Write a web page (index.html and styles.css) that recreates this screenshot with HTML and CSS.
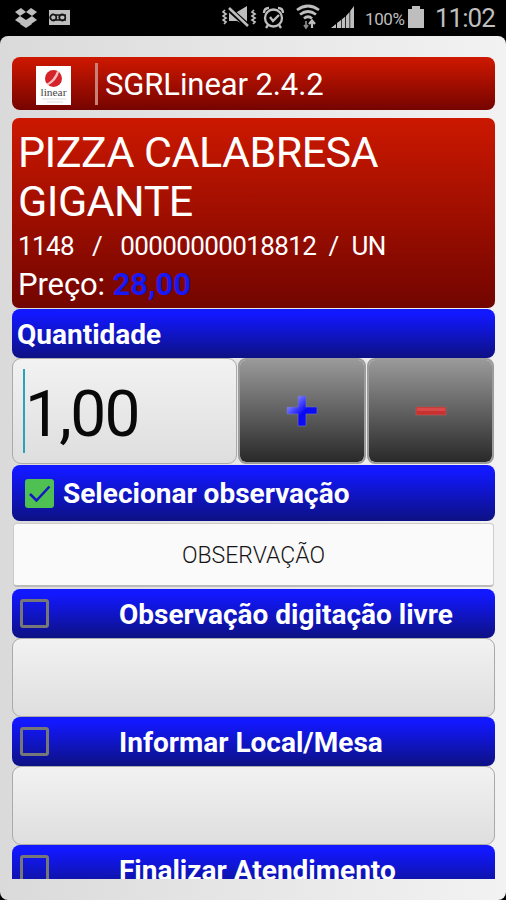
FILE: index.html
```html
<!DOCTYPE html>
<html lang="pt-BR">
<head>
<meta charset="utf-8">
<title>SGRLinear 2.4.2</title>
<link rel="stylesheet" href="styles.css">
</head>
<body>
<header class="status">
  <svg class="status-left" width="54" height="22" viewBox="0 0 54 22" fill="#bebebe">
    <path d="M6 1l5 4-6 4-5-4zM16 1l6 4-5 4-6-4zM5 9l6 4-5 4-6-4zM17 9l5 4-6 4-5-4zM5 17l6-4 6 4-6 4z"/>
    <path d="M34 3h21v15H34z"/>
    <path d="M40 8h11M40 8a3 3 0 1 0 0 5a3 3 0 0 0 0-5M49 8a3 3 0 1 0 0 5a3 3 0 0 0 0-5M38 13h13" fill="none" stroke="#111" stroke-width="1.7"/>
  </svg>
  <svg class="status-right" width="136" height="26" viewBox="0 0 136 26" fill="none" stroke="#bebebe">
    <path d="M3 6l-2 2 3 2-3 2 3 2-3 2 3 2-2 2M32 6l-2 2 3 2-3 2 3 2-3 2 3 2-2 2" stroke-width="1.7"/>
    <path d="M7 8h8l10-6v20l-10-5H7z" fill="#bebebe" stroke="none"/>
    <path d="M6 4l21 19" stroke="#000" stroke-width="5.500"/><path d="M7 4l19 18" stroke-width="2.600"/>
    <circle cx="51.500" cy="14" r="8.500" stroke-width="2.300"/>
    <path d="M42 9c0-3 2-5 5-5M56 4c3 0 5 2 5 5M46 21l-2 3M57 21l2 3M48 13l3 4 6-6" stroke-width="2.300"/>
    <path d="M75 6q11-8 22 0M78 10.500q8-6 16 0M82 14.500q4-3.500 8 0" stroke-width="2.700"/>
    <path d="M84 17v7M82 21l2 3 2-3" stroke-width="1.700" stroke="#8a8a8a"/><path d="M90 24v-7M87 20l3-3.500 3 3.500" stroke-width="2.200"/>
    <path d="M109 24l5-4v4zM115 24v-5l4-3v8zM119.700 24v-8.500l3.500-3V24zM124 24V12l3.500-4v16zM128.200 24V7l3.800-5v22z" fill="#bebebe" stroke="none"/>
  </svg>
  <span class="percent">100%</span>
  <span class="battery"></span>
  <time class="clock">11:02</time>
</header>
<main class="panel">
  <div class="scroller">
    <div class="titlebar">
      <svg class="logo" width="35" height="39" viewBox="0 0 35 39">
        <rect width="35" height="39" fill="#fff"/>
        <circle cx="17.500" cy="12.500" r="8.500" fill="#d5232a"/>
        <path d="M10 18q8-4 11-13l2 1q-2 9-12 14z" fill="#fff" opacity=".7"/>
        <text x="17.500" y="30" text-anchor="middle" textLength="26" lengthAdjust="spacingAndGlyphs">linear</text>
        <path d="M6 33h24M11 36h16" stroke="#ddd" stroke-width="1"/>
      </svg>
      <span class="divider"></span>
      <h1>SGRLinear 2.4.2</h1>
    </div>
    <section class="product">
      <h2>PIZZA CALABRESA<br>GIGANTE</h2>
      <p class="codes"><span>1148</span><span class="slash">/</span><span class="code">00000000018812</span><span class="slash2">/</span><span>UN</span></p>
      <p class="price">Preço: <b>28,00</b></p>
    </section>
    <div class="bar quantity">Quantidade</div>
    <div class="stepper">
      <div class="amount"><i class="caret"></i><span>1,00</span></div>
      <button class="step" aria-label="+"><svg width="32" height="32" viewBox="0 0 32 32"><defs><linearGradient id="plus" x1="0" y1="0" x2="1" y2="1"><stop offset=".2" stop-color="#7878ff"/><stop offset=".55" stop-color="#0808f4"/><stop offset="1" stop-color="#1010f0"/></linearGradient></defs><path d="M12 1h8v11h11v7H20v12h-8V19H1v-7h11z" fill="url(#plus)" stroke="#7777b8" stroke-width=".6"/></svg></button>
      <button class="step" aria-label="−"><svg width="32" height="32" viewBox="0 0 32 32"><path d="M1 12h30v8H1z" fill="#c93030" stroke="#b96060" stroke-width=".6"/><path d="M2 13h28v3H2z" fill="#d84848"/></svg></button>
    </div>
    <div class="bar select">
      <svg class="checked" width="29" height="29" viewBox="0 0 29 29"><rect width="29" height="29" rx="3" fill="#4fc052"/><path d="M5 15l6.500 6.500L24.500 7.500" fill="none" stroke="#1515c8" stroke-width="2.500"/></svg>
      <span>Selecionar observação</span>
    </div>
    <button class="observation"><span>OBSERVAÇÃO</span></button>
    <div class="bar option"><i class="box"></i><span>Observação digitação livre</span></div>
    <div class="field"></div>
    <div class="bar option"><i class="box"></i><span>Informar Local/Mesa</span></div>
    <div class="field"></div>
    <div class="bar option"><i class="box"></i><span>Finalizar Atendimento</span></div>
  </div>
</main>
</body>
</html>
```
FILE: styles.css
```css
* { box-sizing: border-box; }
body { margin: 0; width: 506px; height: 900px; overflow: hidden; background: #000; font-family: Roboto, "Liberation Sans", sans-serif; color: #fff; }
h1, h2, p { margin: 0; font-weight: 400; }
button { padding: 0; margin: 0; font: inherit; }
.status { height: 36px; display: flex; align-items: flex-start; color: #bebebe; padding-left: 15px; }
.status svg { flex: none; }
.status-left { margin-top: 7px; overflow: visible; }
.status-right { margin: 4px 0 0 153px; }
.percent { font-size: 17px; line-height: 20px; margin: 9px 0 0 7px; width: 39px; letter-spacing: -.4px; white-space: nowrap; }
.battery { width: 16px; height: 22px; margin: 6px 0 0 4px; background: #bebebe; clip-path: polygon(0 3px, 4px 3px, 4px 0, 12px 0, 12px 3px, 100% 3px, 100% 100%, 0 100%); }
.clock { font-size: 26px; line-height: 30px; margin: 3px 0 0 11px; letter-spacing: -1px; white-space: nowrap; }
.panel { height: 864px; padding: 21px 11px 21px 12px; border-radius: 8px; background: linear-gradient(90deg, #dadada, #e7e7e7 50%, #f2f2f2); }
.scroller { height: 822px; overflow: hidden; }
.titlebar { height: 53px; border-radius: 8px; background: linear-gradient(#cf1800, #760400); display: flex; align-items: center; padding-left: 24px; margin-bottom: 8px; }
.logo { margin-top: 4px; }
.logo text { font: 11px "Liberation Serif", serif; fill: #444; }
.divider { width: 3px; height: 42px; margin: 0 7px 0 24px; background: #c98077; }
h1 { font-size: 31px; line-height: 40px; margin-top: 2px; letter-spacing: -.1px; white-space: nowrap; }
.product { height: 190px; border-radius: 7px; padding: 10px 6px 0; background: linear-gradient(#cc1800, #720500); margin-bottom: 1px; }
h2 { font-size: 43px; line-height: 49px; letter-spacing: -.55px; white-space: nowrap; }
.codes { display: flex; font-size: 26px; line-height: 32px; height: 36px; padding-top: 4px; letter-spacing: -.6px; white-space: pre; }
.slash { margin: 0 18px; }
.slash2 { margin: 0 13px 0 12px; }
.price { font-size: 31px; line-height: 40px; margin-top: 3px; letter-spacing: -.1px; white-space: nowrap; }
.price b { color: #1818f4; }
.bar { border-radius: 8px; background: linear-gradient(#1218ff 10%, #0d1186 98%); font-size: 28px; font-weight: 700; display: flex; align-items: center; white-space: nowrap; }
.quantity { height: 49px; padding: 2px 0 0 5px; }
.stepper { display: grid; grid-template-columns: 225px 128px 127px; gap: 1px; height: 107px; padding-bottom: 1px; }
.amount, .field { border: 1px solid #aaa; border-radius: 9px; background: linear-gradient(#f2f2f2, #dedede); }
.amount { color: #090909; font-size: 64px; letter-spacing: -1.7px; display: flex; align-items: center; padding-left: 10px; }
.caret { width: 2px; height: 84px; background: #2ba2bc; }
.amount span { padding-top: 8px; line-height: 80px; }
.step { display: flex; align-items: center; justify-content: center; border: 2px solid #9c9c9c; border-radius: 8px; background: linear-gradient(#999, #292929) padding-box; }
.select { height: 56px; padding: 1px 0 0 13px; gap: 9px; }
.checked { margin-top: -1px; }
.observation { display: block; width: 481px; height: 64px; margin: 2px 1px; padding-top: 2px; border: 1px solid #ccc; border-bottom: 2px solid #bbb; border-radius: 4px; background: #fafafa; color: #151515; font-size: 23px; font-weight: 300; }
.option { height: 49px; }
.box { width: 29px; height: 29px; margin: -1px 0 0 8px; border: 3px solid #777; border-radius: 3px; }
.option span { margin: 2px 0 0 70px; }
.field { height: 79px; }
```
